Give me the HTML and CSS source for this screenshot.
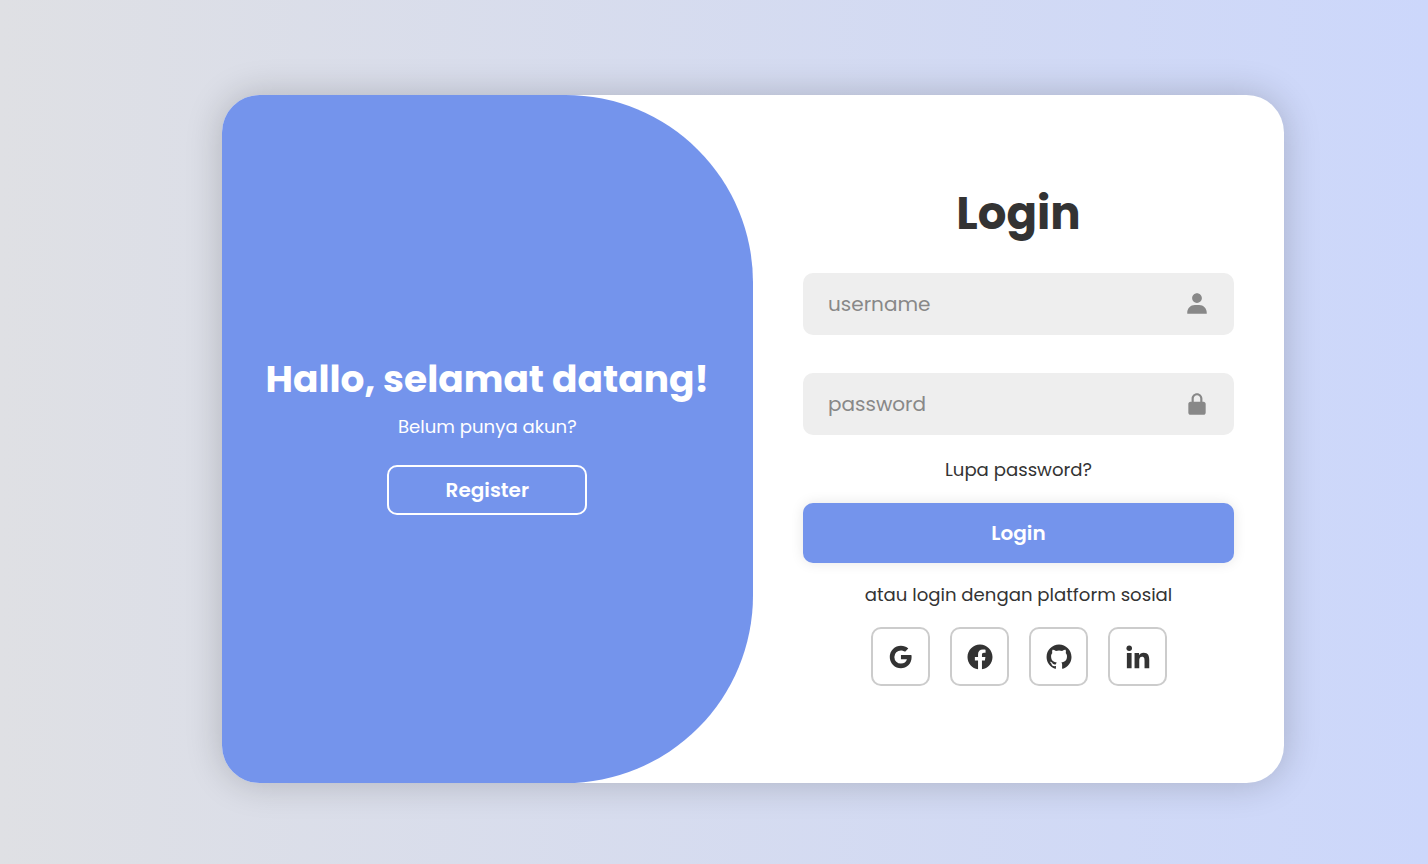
FILE: index.html
```html
<!DOCTYPE html>
<html lang="id">
<head>
<meta charset="utf-8">
<title>Login</title>
<link rel="stylesheet" href="styles.css">
</head>
<body>
<main class="page">
  <div class="card">
    <section class="welcome">
      <h1 class="welcome-title">Hallo, selamat datang!</h1>
      <p class="welcome-text">Belum punya akun?</p>
      <button class="register" type="button">Register</button>
    </section>
    <form class="login">
      <h1 class="login-title">Login</h1>
      <div class="field">
        <span class="placeholder">username</span>
        <svg class="field-icon" viewBox="0 0 24 24"><path d="M7.5 6.5C7.5 8.981 9.519 11 12 11s4.5-2.019 4.5-4.5S14.481 2 12 2 7.5 4.019 7.5 6.5zM20 21h1v-1c0-3.859-3.141-7-7-7h-4c-3.86 0-7 3.141-7 7v1h17z"/></svg>
      </div>
      <div class="field">
        <span class="placeholder">password</span>
        <svg class="field-icon" viewBox="0 0 24 24"><path d="M20 12c0-1.103-.897-2-2-2h-1V7c0-2.757-2.243-5-5-5S7 4.243 7 7v3H6c-1.103 0-2 .897-2 2v8c0 1.103.897 2 2 2h12c1.103 0 2-.897 2-2v-8zM9 7c0-1.654 1.346-3 3-3s3 1.346 3 3v3H9V7z"/></svg>
      </div>
      <p class="forgot">Lupa password?</p>
      <button class="submit" type="button">Login</button>
      <p class="alternative">atau login dengan platform sosial</p>
      <div class="socials">
        <a class="social"><svg viewBox="0 0 24 24"><path d="M20.283 10.356h-8.327v3.451h4.792c-.446 2.193-2.313 3.453-4.792 3.453a5.27 5.27 0 0 1-5.279-5.28 5.27 5.27 0 0 1 5.279-5.279c1.259 0 2.397.447 3.29 1.178l2.6-2.599c-1.584-1.381-3.615-2.233-5.89-2.233a8.908 8.908 0 0 0-8.934 8.934 8.907 8.907 0 0 0 8.934 8.934c4.467 0 8.529-3.249 8.529-8.934 0-.528-.081-1.097-.202-1.625z"/></svg></a>
        <a class="social"><svg viewBox="0 0 24 24"><path d="M12.001 2.002c-5.522 0-9.999 4.477-9.999 9.999 0 4.99 3.656 9.126 8.437 9.879v-6.988h-2.54v-2.891h2.54V9.798c0-2.508 1.493-3.891 3.776-3.891 1.094 0 2.24.195 2.24.195v2.459h-1.264c-1.24 0-1.628.772-1.628 1.563v1.875h2.771l-.443 2.891h-2.328v6.988C18.344 21.129 22 16.992 22 12.001c0-5.522-4.477-9.999-9.999-9.999z"/></svg></a>
        <a class="social"><svg viewBox="0 0 24 24"><path d="M12.026 2c-5.509 0-9.974 4.465-9.974 9.974 0 4.406 2.857 8.145 6.821 9.465.499.09.679-.217.679-.481 0-.237-.008-.865-.011-1.696-2.775.602-3.361-1.338-3.361-1.338-.452-1.152-1.107-1.459-1.107-1.459-.905-.619.069-.605.069-.605 1.002.07 1.527 1.028 1.527 1.028.89 1.524 2.336 1.084 2.902.829.091-.645.351-1.085.635-1.334-2.214-.251-4.542-1.107-4.542-4.93 0-1.087.389-1.979 1.024-2.675-.101-.253-.446-1.268.099-2.64 0 0 .837-.269 2.742 1.021a9.582 9.582 0 0 1 2.496-.336 9.554 9.554 0 0 1 2.496.336c1.906-1.291 2.742-1.021 2.742-1.021.545 1.372.203 2.387.099 2.64.64.696 1.024 1.587 1.024 2.675 0 3.833-2.33 4.675-4.552 4.922.355.308.675.916.675 1.846 0 1.334-.012 2.41-.012 2.737 0 .267.178.577.687.479C19.146 20.115 22 16.379 22 11.974 22 6.465 17.535 2 12.026 2z"/></svg></a>
        <a class="social"><svg viewBox="0 0 24 24"><circle cx="4.983" cy="5.009" r="2.188"/><path d="M9.237 8.855v12.139h3.769v-6.003c0-1.584.298-3.118 2.262-3.118 1.937 0 1.961 1.811 1.961 3.218v5.904H21v-6.657c0-3.27-.704-5.783-4.526-5.783-1.835 0-3.065 1.007-3.568 1.96h-.051v-1.66H9.237zm-6.142 0H6.87v12.139H3.095z"/></svg></a>
      </div>
    </form>
  </div>
</main>
</body>
</html>
```
FILE: styles.css
```css
* { box-sizing: border-box; margin: 0; padding: 0; }
body {
  font-family: Poppins, Inter, "Open Sans", sans-serif;
  color: #333;
}
.page {
  height: 100vh;
  padding: 95px 144px 0 222px;
  overflow: hidden;
  background: linear-gradient(90deg, #dfe0e4, #ccd7fb);
}
.card {
  width: 1062px;
  height: 688px;
  display: flex;
  border-radius: 37.5px;
  overflow: hidden;
  background: #fff;
  box-shadow: 0 0 37.5px rgba(0, 0, 0, .2);
}
.welcome {
  width: 531px;
  display: flex;
  flex-direction: column;
  align-items: center;
  padding: 256px .4px 0 0;
  border-radius: 0 187.5px 187.5px 0;
  background: #7494ec;
  color: #fff;
}
.welcome-title { font-size: 37.5px; line-height: 56px; font-weight: 700; white-space: nowrap; }
.welcome-text { font-size: 18.125px; line-height: 28px; margin-top: 6px; }
.register {
  width: 200px;
  height: 50px;
  margin-top: 24px;
  border: 2px solid #fff;
  border-radius: 10px;
  background: transparent;
  color: #fff;
  font: inherit;
  font-size: 20px;
  font-weight: 600;
}
.login {
  flex: 1;
  display: flex;
  flex-direction: column;
  padding: 85px 50px 0;
  text-align: center;
}
.login-title { font-size: 45px; line-height: 68px; font-weight: 700; margin-bottom: 25px; }
.field {
  height: 62px;
  margin-bottom: 38px;
  padding: 0 24px 0 25px;
  display: flex;
  align-items: center;
  justify-content: space-between;
  border-radius: 10px;
  background: #eee;
}
.placeholder { font-size: 20px; line-height: 30px; color: #888; }
.field-icon { width: 26px; height: 26px; margin-bottom: 1px; fill: #888; }
.forgot { font-size: 18.125px; line-height: 28px; margin-top: -17px; }
.submit {
  height: 60px;
  margin-top: 19px;
  border: 0;
  border-radius: 10px;
  background: #7494ec;
  box-shadow: 0 0 12.5px rgba(0, 0, 0, .1);
  color: #fff;
  font: inherit;
  font-size: 20px;
  font-weight: 600;
}
.alternative { font-size: 18.125px; line-height: 28px; margin-top: 18px; }
.socials { display: flex; justify-content: center; gap: 20px; margin-top: 18px; }
.social {
  width: 59px;
  height: 59px;
  display: flex;
  align-items: center;
  justify-content: center;
  padding-left: 1px;
  border: 2px solid #ccc;
  border-radius: 10px;
}
.social svg { width: 30px; height: 30px; fill: #333; }
```
